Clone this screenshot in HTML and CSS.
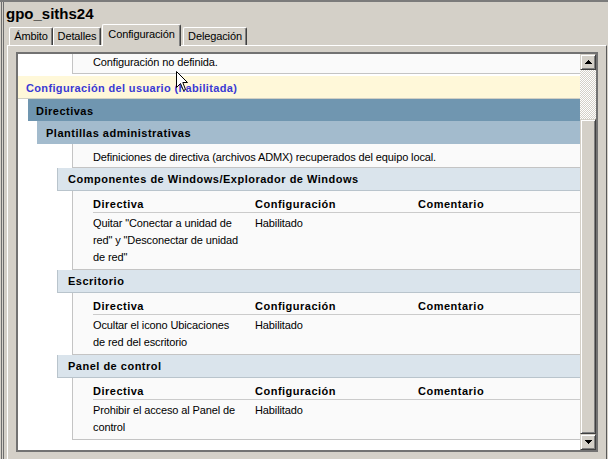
FILE: index.html
```html
<!DOCTYPE html>
<html>
<head>
<meta charset="utf-8">
<link rel="stylesheet" href="styles.css">
</head>
<body>
<div class="window">
  <div class="title">gpo_siths24</div>
  <div class="tabs">
    <div class="tab t1">Ámbito</div>
    <div class="tab t2">Detalles</div>
    <div class="tab t3 selected">Configuración</div>
    <div class="tab t4">Delegación</div>
  </div>
  <div class="panel">
    <div class="box">
      <div class="content">
        <div class="body first">Configuración no definida.</div>
        <div class="hdr user">Configuración del usuario (habilitada)</div>
        <div class="hdr dir">Directivas</div>
        <div class="hdr adm">Plantillas administrativas</div>
        <div class="body note">Definiciones de directiva (archivos ADMX) recuperados del equipo local.</div>

        <div class="hdr cat">Componentes de Windows/Explorador de Windows</div>
        <div class="body tbl">
          <div class="th">Directiva</div><div class="th">Configuración</div><div class="th">Comentario</div>
          <div class="td">Quitar "Conectar a unidad de<br>red" y "Desconectar de unidad<br>de red"</div><div class="td">Habilitado</div><div class="td"></div>
        </div>

        <div class="hdr cat">Escritorio</div>
        <div class="body tbl">
          <div class="th">Directiva</div><div class="th">Configuración</div><div class="th">Comentario</div>
          <div class="td">Ocultar el icono Ubicaciones<br>de red del escritorio</div><div class="td">Habilitado</div><div class="td"></div>
        </div>

        <div class="hdr cat">Panel de control</div>
        <div class="body tbl">
          <div class="th">Directiva</div><div class="th">Configuración</div><div class="th">Comentario</div>
          <div class="td">Prohibir el acceso al Panel de<br>control</div><div class="td">Habilitado</div><div class="td"></div>
        </div>

        <svg class="cursor" width="13" height="21" viewBox="0 0 13 21">
          <path d="M0.5 0.5 V16.5 L4.5 12.5 L7.5 19.5 L9.5 18.5 L6.8 11.5 H11.5 Z" fill="#fff" stroke="#000" stroke-width="1" stroke-linejoin="miter"/>
        </svg>
      </div>
      <div class="scrollbar">
        <div class="sb-btn">
          <svg width="7" height="4" viewBox="0 0 7 4" shape-rendering="crispEdges"><path d="M3 0h1v1H3zM2 1h3v1H2zM1 2h5v1H1zM0 3h7v1H0z" fill="#000"/></svg>
        </div>
        <div class="track"><div class="thumb"></div></div>
        <div class="sb-btn">
          <svg width="7" height="4" viewBox="0 0 7 4" shape-rendering="crispEdges"><path d="M0 0h7v1H0zM1 1h5v1H1zM2 2h3v1H2zM3 3h1v1H3z" fill="#000"/></svg>
        </div>
      </div>
    </div>
  </div>
</div>
</body>
</html>
```
FILE: styles.css
```css
html, body {
  margin: 0;
  padding: 0;
}
body {
  width: 608px;
  height: 459px;
  overflow: hidden;
  background: #d4d0c8;
  font-family: "Liberation Sans", Arial, sans-serif;
  font-size: 11px;
  letter-spacing: -0.12px;
  color: #000;
}
.window {
  height: 457px;
  border-top: 2px solid #7b7b7b;
  background: linear-gradient(to right, #d4d0c8 0 1px, #6e6e6e 1px 2px, #d4d0c8 2px 3px, #6e6e6e 3px 4px, #d4d0c8 4px);
}
.title {
  height: 22px;
  box-sizing: border-box;
  padding: 2px 0 0 6px;
  font-weight: bold;
  font-size: 15px;
  letter-spacing: 0;
  line-height: 20px;
}
.tabs {
  display: flex;
  align-items: flex-end;
  height: 21px;
  padding-left: 9px;
}
.tab {
  box-sizing: border-box;
  height: 18px;
  border-top: 1px solid #fff;
  border-left: 1px solid #fff;
  border-right: 1px solid #404040;
  box-shadow: inset -1px 0 #808080;
  border-radius: 2px 2px 0 0;
  text-align: center;
  line-height: 17px;
  background: #d4d0c8;
}
.t1 { width: 44px; }
.t2 { width: 48px; }
.t3 { width: 79px; margin-left: 1px; }
.t4 { width: 64px; margin-left: 2px; }
.selected {
  height: 22px;
  margin-bottom: -1px;
  line-height: 19px;
  position: relative;
  z-index: 2;
}
.panel {
  margin-left: 7px;
  width: 600px;
  height: 414px;
  box-sizing: border-box;
  border-top: 1px solid #fff;
  border-left: 1px solid #fff;
  border-right: 1px solid #5a5a5a;
  padding: 6px 0 0 8px;
}
.box {
  width: 582px;
  height: 400px;
  box-sizing: border-box;
  border: 2px solid #727272;
  display: flex;
  background: #fff;
}
.content {
  width: 562px;
  position: relative;
  overflow: hidden;
  background: #fff;
}
.hdr {
  font-weight: bold;
  letter-spacing: 0.5px;
  white-space: nowrap;
  box-sizing: border-box;
}
.body {
  margin-left: 54px;
  border-left: 1px solid #c4c4c4;
  border-bottom: 1px solid #c4c4c4;
  background: #fafafa;
  padding-left: 20px;
  line-height: 16px;
}
.first {
  padding-bottom: 3px;
  margin-bottom: 2px;
}
.user {
  height: 23px;
  border-bottom: 1px solid #d2d0c4;
  background: #fff8d9;
  color: #3a3ad4;
  letter-spacing: 0.35px;
  line-height: 22px;
  padding-top: 1px;
  padding-left: 8px;
}
.dir {
  margin-left: 10px;
  height: 22px;
  line-height: 20px;
  padding-top: 2px;
  padding-left: 8px;
  background: #7096b0;
}
.adm {
  margin-left: 19px;
  height: 23px;
  line-height: 21px;
  padding-top: 2px;
  padding-left: 9px;
  background: #a3bbcd;
}
.note {
  padding-top: 5px;
  padding-bottom: 2px;
}
.cat {
  margin-left: 39px;
  height: 23px;
  border-left: 1px solid #b9c4cc;
  border-bottom: 1px solid #b9c4cc;
  line-height: 21px;
  padding-top: 1px;
  padding-left: 10px;
  background: #dae4ec;
}
.tbl {
  display: grid;
  grid-template-columns: 162px 163px 1fr;
  padding-top: 6px;
  padding-bottom: 3px;
  padding-left: 20px;
}
.th {
  font-weight: bold;
  letter-spacing: 0.5px;
  line-height: 15px;
  border-bottom: 1px solid #cbcbcb;
}
.td {
  padding-top: 2px;
  line-height: 17px;
}
.cursor {
  position: absolute;
  left: 158px;
  top: 17px;
}
.scrollbar {
  width: 16px;
  display: flex;
  flex-direction: column;
}
.sb-btn, .thumb {
  box-sizing: border-box;
  border: 1px solid;
  border-color: #d4d0c8 #404040 #404040 #d4d0c8;
  box-shadow: inset 1px 1px #fff, inset -1px -1px #808080;
  background: #d4d0c8;
}
.sb-btn {
  height: 16px;
  display: flex;
  align-items: center;
  justify-content: center;
}
.track {
  flex: 1;
  display: flex;
  flex-direction: column;
  padding-top: 49px;
  background: repeating-conic-gradient(#d4d0c8 0 25%, #fff 0 50%) 0 0 / 2px 2px;
}
.thumb {
  flex: 1;
}
```
